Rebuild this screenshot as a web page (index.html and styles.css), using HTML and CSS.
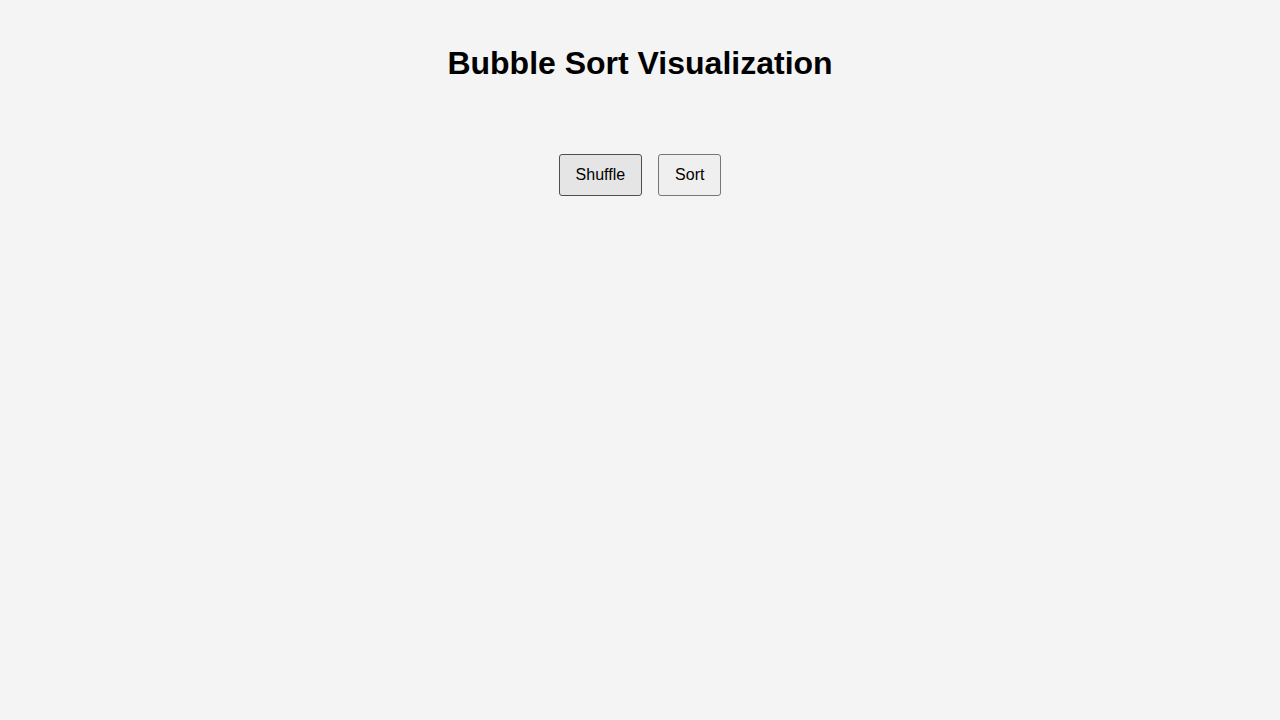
FILE: index.html
```html
<!DOCTYPE html>
<html>
<head>
<meta charset="utf-8">
<title>Bubble Sort Visualization</title>
<link rel="stylesheet" href="styles.css">
</head>
<body>
<h1 class="title">Bubble Sort Visualization</h1>
<div class="array"></div>
<div class="controls">
  <button class="btn btn-hover">Shuffle</button>
  <button class="btn">Sort</button>
</div>
</body>
</html>
```
FILE: styles.css
```css
html, body {
  background: #f4f4f4;
}
body {
  margin: 0;
  padding: 20px;
  font-family: "Liberation Sans", Arial, sans-serif;
  text-align: center;
}
.title {
  font-size: 32px;
  font-weight: bold;
  margin: 25px 0 21px;
  color: #000;
}
.array {
  height: 0;
  margin: 72px 0 0;
}
.controls {
  display: flex;
  justify-content: center;
  gap: 16px;
}
.btn {
  font-family: "Liberation Sans", Arial, sans-serif;
  font-size: 16px;
  padding: 11px 16px;
  border: 1px solid #767676;
  border-radius: 3px;
  background: #efefef;
  color: #000;
  line-height: 18px;
}
.btn-hover {
  background: #e5e5e5;
  border-color: #4f4f4f;
}
```
